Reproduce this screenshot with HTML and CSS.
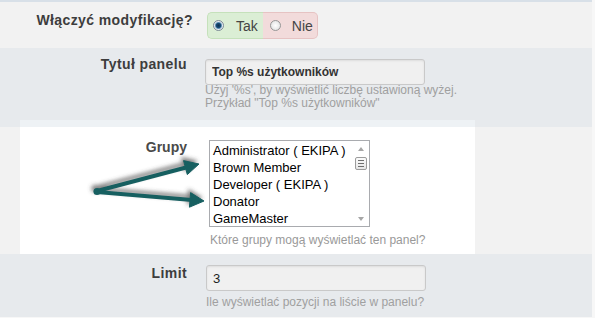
FILE: index.html
```html
<!DOCTYPE html>
<html lang="pl">
<head>
	<meta charset="utf-8">
	<title>Ustawienia panelu</title>
	<link rel="stylesheet" href="styles.css">
</head>
<body>
	<div class="settings">
		<div class="row row-toggle">
			<div class="label label-wide">Włączyć modyfikację?</div>
			<div class="field">
				<div class="switch">
					<span class="choice choice-yes"><span class="radio checked"></span>Tak</span>
					<span class="choice choice-no"><span class="radio"></span>Nie</span>
				</div>
			</div>
		</div>

		<div class="row row-alt row-title">
			<div class="label">Tytuł panelu</div>
			<div class="field">
				<input type="text" class="text-input" value="Top %s użytkowników">
				<p class="hint">Użyj '%s', by wyświetlić liczbę ustawioną wyżej.<br>Przykład "Top %s użytkowników"</p>
			</div>
		</div>

		<div class="row row-groups">
			<div class="spotlight"></div>
			<div class="label">Grupy</div>
			<div class="field">
				<div class="listbox">
					<div class="options">
						<div>Administrator ( EKIPA )</div>
						<div>Brown Member</div>
						<div>Developer ( EKIPA )</div>
						<div>Donator</div>
						<div>GameMaster</div>
					</div>
					<div class="scrollbar">
						<span class="arrow-up"></span>
						<span class="thumb"></span>
						<span class="arrow-down"></span>
					</div>
				</div>
				<p class="hint hint-groups">Które grupy mogą wyświetlać ten panel?</p>
			</div>
			<!-- strzałki wskazujące grupy -->
			<svg class="pointer" width="140" height="70" viewBox="80 147 140 70">
				<defs>
					<filter id="shade" x="-30%" y="-60%" width="160%" height="220%">
						<feDropShadow dx="-2" dy="-3" stdDeviation="2.2" flood-color="#444" flood-opacity="0.7"/>
					</filter>
				</defs>
				<g filter="url(#shade)" fill="#165f61" stroke="#165f61">
					<line x1="97" y1="191" x2="187" y2="167.2" stroke-width="4" stroke-linecap="round"/>
					<line x1="97" y1="192" x2="192" y2="200" stroke-width="4" stroke-linecap="round"/>
					<polygon points="199,164 187.3,174.6 183.5,160.6" stroke-width="1" stroke-linejoin="round"/>
					<polygon points="204,201 189.4,207.2 190.6,192.6" stroke-width="1" stroke-linejoin="round"/>
					<circle cx="97" cy="191.5" r="3.6" stroke="none"/>
				</g>
			</svg>
		</div>

		<div class="row row-alt row-limit">
			<div class="label">Limit</div>
			<div class="field">
				<input type="text" class="text-input text-input-plain" value="3">
				<p class="hint">Ile wyświetlać pozycji na liście w panelu?</p>
			</div>
		</div>
	</div>
</body>
</html>
```

FILE: styles.css
```css
* {
	margin: 0;
	padding: 0;
	box-sizing: border-box;
}

body {
	background: #f7f7f7;
	font-family: "Liberation Sans", Arial, sans-serif;
	color: #444;
}

.settings {
	width: 592px;
	border-top: 2px solid #d8e0e8;
}

.row {
	display: flex;
	position: relative;
	background: #f2f2f2;
}

.row-alt {
	background: #e7eaed;
}

.label {
	width: 187px;
	text-align: right;
	font-size: 14px;
	font-weight: bold;
	line-height: 16px;
	letter-spacing: 0.4px;
	color: #3d3d3d;
}

.field {
	margin-left: 18px;
}

.hint {
	font-size: 12px;
	line-height: 13px;
	color: #a0a0a0;
}

/* wiersz 1 */
.row-toggle {
	padding: 10px 0 9px;
}

.label-wide {
	width: 193px;
}

.row-toggle .field {
	margin-left: 14px;
}

.switch {
	display: flex;
	height: 27px;
}

.choice {
	display: flex;
	align-items: center;
	font-size: 14px;
	color: #444;
}

.choice-yes {
	gap: 12px;
	padding: 0 5px;
	background: #dbeed5;
	border: 1px solid #c5e1bb;
	border-right: 0;
	border-radius: 5px 0 0 5px;
}

.choice-no {
	gap: 11px;
	padding: 0 4px 0 7px;
	background: #f2dbdb;
	border: 1px solid #e6c3c3;
	border-left: 0;
	border-radius: 0 5px 5px 0;
}

.radio {
	width: 11px;
	height: 11px;
	border-radius: 50%;
	border: 1px solid #979797;
	background: radial-gradient(circle, #fff 0, #dcdcdc 100%);
}

.radio.checked {
	border-color: #7c8a96;
	background: radial-gradient(circle, #0b2f50 0, #164a74 2.2px, #5b8db3 3px, #e4ebf1 4px);
}

/* wiersz 2 */
.row-title {
	padding: 8px 0 17px;
}

.row-title .hint {
	margin-top: -1px;
}

.text-input {
	display: block;
	width: 220px;
	height: 26px;
	margin-top: 3px;
	padding: 0 6px;
	border: 1px solid #c9c9c9;
	border-radius: 3px;
	background: #f0f0f0;
	box-shadow: inset 0 1px 2px rgba(0, 0, 0, 0.08);
	font-family: "Liberation Sans", Arial, sans-serif;
	font-size: 12px;
	font-weight: bold;
	color: #333;
	outline: none;
}

/* wiersz 3 */
.row-groups {
	padding: 12px 0 7px;
}

.spotlight {
	position: absolute;
	left: 20px;
	top: -7px;
	bottom: 0;
	width: 455px;
	background: linear-gradient(#eef2f5 0, #eef2f5 7px, #fff 7px);
}

.row-groups .label,
.row-groups .field {
	position: relative;
}

.row-groups .label {
	letter-spacing: 0;
	color: #4a4a4a;
}

.row-groups .field {
	margin-left: 22px;
	padding-top: 1px;
}

.listbox {
	display: flex;
	width: 161px;
	height: 87px;
	border: 1px solid #a9abaf;
	background: #fff;
}

.options {
	flex: 1;
	padding: 1px 0 0 3px;
	font-size: 13px;
	line-height: 17px;
	color: #000;
	white-space: nowrap;
	overflow: hidden;
}

.scrollbar {
	width: 17px;
	display: flex;
	flex-direction: column;
	align-items: center;
	padding: 6px 0 5px;
}

.arrow-up {
	width: 0;
	height: 0;
	border-left: 3px solid transparent;
	border-right: 3px solid transparent;
	border-bottom: 4px solid #a6a6a6;
}

.arrow-down {
	width: 0;
	height: 0;
	margin-top: auto;
	border-left: 3px solid transparent;
	border-right: 3px solid transparent;
	border-top: 4px solid #a6a6a6;
}

.thumb {
	display: flex;
	align-items: center;
	justify-content: center;
	width: 12px;
	height: 13px;
	margin-top: 6px;
	border: 1px solid #9c9c9c;
	border-radius: 2px;
	background: linear-gradient(#fbfbfb, #e6e6e6);
}

.thumb::after {
	content: "";
	width: 6px;
	height: 5px;
	border-top: 1px solid #6f6f6f;
	border-bottom: 1px solid #6f6f6f;
	background: linear-gradient(#6f6f6f, #6f6f6f) center / 100% 1px no-repeat;
}

.hint-groups {
	margin-top: 6px;
	padding-left: 1px;
	line-height: 14px;
	color: #999;
}

.pointer {
	position: absolute;
	left: 80px;
	top: 20px;
	overflow: visible;
}

/* wiersz 4 */
.row-limit {
	padding: 11px 0 8px;
}

.row-limit .field {
	margin-left: 19px;
}

.row-limit .text-input {
	margin-top: 0;
}

.text-input-plain {
	font-size: 13px;
	font-weight: normal;
	color: #222;
}

.row-limit .hint {
	margin-top: 5px;
}
```
